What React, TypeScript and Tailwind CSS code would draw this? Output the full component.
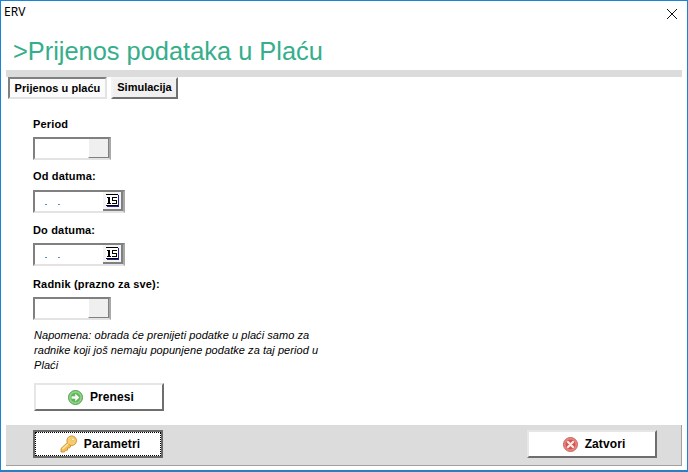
const sunken =
  'border-2 border-t-[#808080] border-l-[#808080] border-r-[#a8a8a8] border-b-[#e3e3e3] bg-white';

function Label({ children, className = '' }: { children: string; className?: string }) {
  return <div className={`h-[14px] text-[11px] leading-[14px] font-bold tracking-[0.17px] text-black ${className}`}>{children}</div>;
}

function LookupInput({ className = '' }: { className?: string }) {
  return (
    <div className={`flex h-[23px] w-[78px] ${sunken} ${className}`}>
      <div className="flex-1" />
      <div className="w-[21px] border-l border-l-white border-r border-r-[#808080] border-b border-b-[#808080] bg-[#efefef]" />
    </div>
  );
}

function CalendarGlyph() {
  return (
    <svg width="13" height="13" viewBox="0 0 13 13" shapeRendering="crispEdges">
      <rect x="0" y="0" width="12" height="12" fill="#fff" />
      <rect x="0" y="0" width="12" height="1" fill="#000" />
      <rect x="0" y="11" width="12" height="1" fill="#000" />
      <rect x="12" y="1" width="1" height="12" fill="#23238f" />
      <rect x="1" y="12" width="12" height="1" fill="#23238f" />
      <path d="M2 3h2v6h1v1H1V9h1V4H1V3z" fill="#000" />
      <path d="M6 3h5v1H7v2h4v4H6V9h4V7H6z" fill="#000" />
    </svg>
  );
}

function DateInput({ className = '' }: { className?: string }) {
  return (
    <div className={`flex h-[23px] w-[92px] ${sunken} ${className}`}>
      <div className="flex flex-1 items-center pl-[10px] pt-[5px]">
        <span className="h-px w-[2px] bg-[#5a8fc0]" />
        <span className="ml-[11px] h-px w-[2px] bg-[#5a8fc0]" />
      </div>
      <div className="flex w-[20px] items-center justify-center border-r-2 border-b-2 border-r-[#808080] border-b-[#808080] bg-[#f4f4f4]">
        <CalendarGlyph />
      </div>
    </div>
  );
}

function GoIcon() {
  return (
    <svg width="15" height="15" viewBox="0 0 15 15">
      <circle cx="7.5" cy="7.5" r="7" fill="#8fd488" stroke="#4f9e4c" />
      <circle cx="7.5" cy="7.5" r="4.8" fill="#5fb558" />
      <path d="M3.6 6.2h3.6V3.6l4.2 3.9-4.2 3.9V8.8H3.6z" fill="#f6f8f4" />
    </svg>
  );
}

function KeyIcon() {
  return (
    <svg width="17" height="18" viewBox="0 0 17 18">
      <path d="M8.500 6.500 1 13.500V17h3.500l1-1.800h2V13h2l1.800-2.700z" fill="#f6bf52" stroke="#c98f35" strokeWidth="0.9" strokeLinejoin="round" />
      <circle cx="11.700" cy="5.700" r="4.800" fill="#f8cc6b" stroke="#c98f35" strokeWidth="0.9" />
      <circle cx="13" cy="4.400" r="1.300" fill="#fff6d8" stroke="#d7a548" strokeWidth="0.5" />
      <path d="M2.500 14 8.500 8.500" stroke="#fde9ad" strokeWidth="1.100" />
    </svg>
  );
}

function CloseIcon() {
  return (
    <svg width="15" height="15" viewBox="0 0 15 15">
      <circle cx="7.5" cy="7.5" r="7" fill="#e58a84" stroke="#c9635c" />
      <circle cx="7.5" cy="7.5" r="5" fill="#d8544e" />
      <path d="M5 5l5 5M10 5l-5 5" stroke="#fdeeed" strokeWidth="2.2" strokeLinecap="round" />
    </svg>
  );
}

function ActionButton({ icon, label, focused = false, gap = 'gap-[7px]' }: { icon: React.ReactNode; label: string; focused?: boolean; gap?: string }) {
  return (
    <button
      className={`flex h-[28px] w-[130px] items-center justify-center bg-white pl-[4px] ${
        focused
          ? 'border-2 border-[#6a6a6a] outline-1 -outline-offset-3 outline-dotted outline-black'
          : 'border-2 border-t-[#e6e6e6] border-l-[#e6e6e6] border-r-[#6e6e6e] border-b-[#6e6e6e]'
      }`}
    >
      <span className={`flex items-center ${gap} text-[12px] font-bold tracking-[0.1px] text-black`}>
        {icon}
        {label}
      </span>
    </button>
  );
}

export default function App() {
  return (
    <div className="flex h-[472px] w-[688px] flex-col overflow-hidden border border-[#1a84d6] border-b-2 border-b-[#2a7fc4] bg-white font-['Liberation_Sans',Arial,sans-serif]">
      {/* Title bar */}
      <div className="flex h-[29px] shrink-0 items-start justify-between pl-[3px] pr-[10px] pt-[3px]">
        <span className="font-['Noto_Sans',sans-serif] text-[12px] leading-[16px] text-black">ERV</span>
        <svg className="mt-[5px]" width="10" height="10" viewBox="0 0 10 10">
          <path d="M0 0l10 10M10 0L0 10" stroke="#111" strokeWidth="1" />
        </svg>
      </div>

      <h1 className="h-[40px] shrink-0 pl-[12px] pt-[7px] text-[25.4px] leading-[28px] font-normal text-[#35ae8b]">
        &gt;Prijenos podataka u Plaću
      </h1>

      <div className="mx-[5px] h-[7px] shrink-0 bg-[#dcdcdc]" />

      {/* Tabs */}
      <div className="flex h-[22px] shrink-0 gap-[4px] pl-[7px]">
        <div className="flex w-[99px] items-center justify-center border-2 border-t-[#808080] border-l-[#808080] border-r-[#e3e3e3] border-b-[#e3e3e3] bg-[#fbfbfb] text-[11px] font-bold tracking-[0.05px] text-black">
          Prijenos u plaću
        </div>
        <div className="flex w-[67px] items-center justify-center border-2 border-t-[#f4f4f4] border-l-[#f4f4f4] border-r-[#707070] border-b-[#707070] bg-[#f0f0f0] pb-[2px] text-[11px] font-bold text-black">
          Simulacija
        </div>
      </div>

      {/* Form */}
      <div className="flex min-h-0 flex-1 flex-col pl-[32px] pt-[18px]">
        <Label>Period</Label>
        <LookupInput className="mt-[6px]" />
        <Label className="mt-[9px]">Od datuma:</Label>
        <DateInput className="mt-[7px]" />
        <Label className="mt-[10px]">Do datuma:</Label>
        <DateInput className="mt-[6px]" />
        <Label className="mt-[11px]">Radnik (prazno za sve):</Label>
        <LookupInput className="mt-[6px]" />
        <p className="mt-[8px] w-[298px] pl-px text-[11px] leading-[15px] tracking-[0.06px] text-black italic">
          Napomena: obrada će prenijeti podatke u plaći samo za radnike koji još nemaju popunjene podatke za taj period u Plaći
        </p>
        <div className="mt-[10px] pl-px">
          <ActionButton icon={<GoIcon />} label="Prenesi" />
        </div>
      </div>

      {/* Footer */}
      <div className="mx-[5px] mb-[4px] flex h-[41px] shrink-0 items-start justify-between border-r border-b border-[#a0a0a0] bg-[#dcdcdc] pl-[27px] pr-[24px] pt-[5px]">
        <ActionButton focused icon={<KeyIcon />} label="Parametri" />
        <ActionButton icon={<CloseIcon />} label="Zatvori" />
      </div>
    </div>
  );
}
